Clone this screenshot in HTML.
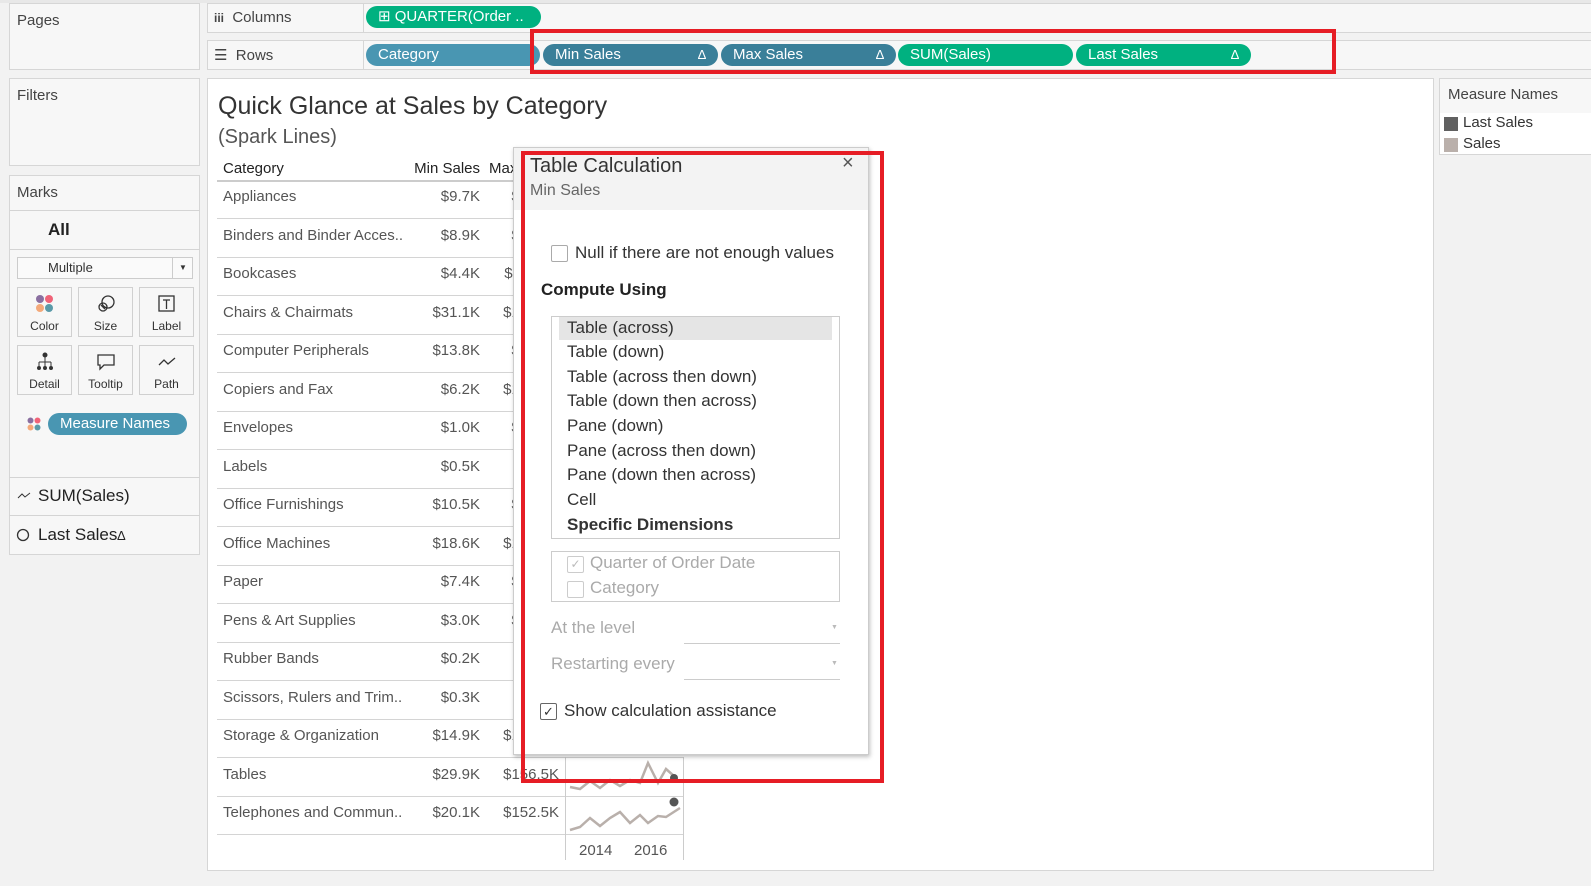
<!DOCTYPE html>
<html><head><meta charset="utf-8"><style>
*{margin:0;padding:0;box-sizing:border-box}
body{width:1591px;height:886px;background:#f2f2f2;font-family:"Liberation Sans",sans-serif;position:relative;overflow:hidden;color:#333}
.a{position:absolute}
.box{position:absolute;background:#f7f7f7;border:1px solid #d6d6d6}
.pill{position:absolute;height:22px;border-radius:11px;color:#fff;font-size:15px;line-height:22px;padding-left:12px}
.t{position:absolute;font-size:15px;color:#555;white-space:nowrap}
.r{text-align:right}
.hl{position:absolute;height:1px;background:#d4d4d4}
.mk{position:absolute;width:55px;height:50px;border:1px solid #d0d0d0;background:#f7f7f7;font-size:12px;text-align:center;color:#333}
.mk span{position:absolute;bottom:3px;left:0;right:0}
.cb{position:absolute;width:17px;height:17px;border:1px solid #aaa;background:#fff;border-radius:2px}
.li{position:absolute;left:567px;font-size:17px;color:#333}
.redb{position:absolute;border:4px solid #e61d25}
</style></head><body>
<div class="a" style="left:0;top:0;width:1591px;height:3px;background:#e8e8e8"></div>
<div class="box" style="left:9px;top:3px;width:191px;height:67px"><div class="t" style="left:7px;top:8px;color:#444">Pages</div></div>
<div class="box" style="left:9px;top:78px;width:191px;height:88px"><div class="t" style="left:7px;top:8px;color:#444">Filters</div></div>
<div class="box" style="left:9px;top:175px;width:191px;height:380px">
<div class="t" style="left:7px;top:8px;color:#444">Marks</div>
<div class="hl" style="left:0;top:34px;width:190px"></div>
<div class="a" style="left:38px;top:44px;font-size:17px;font-weight:bold;color:#222">All</div>
<div class="hl" style="left:0;top:73px;width:190px"></div>
<div class="a" style="left:7px;top:81px;width:176px;height:22px;border:1px solid #ccc;background:#fafafa;font-size:13px;line-height:20px;padding-left:30px">Multiple<div class="a" style="left:154px;top:0;width:1px;height:20px;background:#ccc"></div><div class="a" style="left:161px;top:0;font-size:8px">▼</div></div>
</div>
<div class="mk" style="left:17px;top:287px"><svg class="a" style="left:17px;top:6px" width="20" height="20"><circle cx="5" cy="5" r="4" fill="#8a6fa0"/><circle cx="14" cy="5" r="4" fill="#f06378"/><circle cx="5" cy="14" r="4" fill="#f4a97a"/><circle cx="14" cy="14" r="4" fill="#5a9aa8"/></svg><span>Color</span></div>
<div class="mk" style="left:78px;top:287px"><svg class="a" style="left:17px;top:6px" width="20" height="20" fill="none" stroke="#333" stroke-width="1.3"><circle cx="12" cy="8" r="6"/><circle cx="7" cy="13" r="4"/><path d="M5 11l4 4"/></svg><span>Size</span></div>
<div class="mk" style="left:139px;top:287px"><svg class="a" style="left:17px;top:6px" width="20" height="20" fill="none" stroke="#333" stroke-width="1.3"><rect x="2" y="2" width="15" height="15"/><path d="M6 6h7M9.5 6v9"/></svg><span>Label</span></div>
<div class="mk" style="left:17px;top:345px"><svg class="a" style="left:17px;top:6px" width="20" height="20" fill="#333" stroke="#333"><circle cx="10" cy="3" r="2"/><path d="M10 5v5M4 10h12M4 10v4M10 10v4M16 10v4" fill="none"/><circle cx="4" cy="16" r="1.5"/><circle cx="10" cy="16" r="1.5"/><circle cx="16" cy="16" r="1.5"/></svg><span>Detail</span></div>
<div class="mk" style="left:78px;top:345px"><svg class="a" style="left:17px;top:6px" width="20" height="20" fill="none" stroke="#333" stroke-width="1.3"><path d="M2 3h16v10H8l-4 4v-4H2z"/></svg><span>Tooltip</span></div>
<div class="mk" style="left:139px;top:345px"><svg class="a" style="left:17px;top:6px" width="20" height="20" fill="none" stroke="#333" stroke-width="1.3"><path d="M2 13l5-5 4 4 7-6"/></svg><span>Path</span></div>
<svg class="a" style="left:27px;top:417px" width="14" height="14"><circle cx="3.5" cy="3.5" r="3" fill="#8a6fa0"/><circle cx="10.5" cy="3.5" r="3" fill="#f06378"/><circle cx="3.5" cy="10.5" r="3" fill="#f4a97a"/><circle cx="10.5" cy="10.5" r="3" fill="#5a9aa8"/></svg>
<div class="pill" style="left:48px;top:413px;width:139px;background:#4996b2;padding-left:12px">Measure Names</div>
<div class="hl" style="left:9px;top:477px;width:191px"></div>
<svg class="a" style="left:17px;top:489px" width="14" height="12" fill="none" stroke="#333"><path d="M1 9l4-4 3 3 5-4"/></svg>
<div class="a" style="left:38px;top:486px;font-size:17px;color:#222">SUM(Sales)</div>
<div class="hl" style="left:9px;top:515px;width:191px"></div>
<svg class="a" style="left:16px;top:528px" width="14" height="14" fill="none" stroke="#333" stroke-width="1.3"><circle cx="7" cy="7" r="5.5"/></svg>
<div class="a" style="left:38px;top:525px;font-size:17px;color:#222">Last Sales<span style="font-size:13px">∆</span></div>
<div class="box" style="left:207px;top:3px;width:1384px;height:30px;border-right:none"></div>
<div class="a" style="left:363px;top:3px;width:1px;height:30px;background:#d6d6d6"></div>
<div class="t" style="left:214px;top:9px;color:#444"><b style="font-size:12px">iii</b>&nbsp; Columns</div>
<div class="pill" style="left:366px;top:6px;width:175px;background:#00b180">⊞ QUARTER(Order ..</div>
<div class="box" style="left:207px;top:40px;width:1384px;height:30px;border-right:none"></div>
<div class="a" style="left:363px;top:40px;width:1px;height:30px;background:#d6d6d6"></div>
<div class="t" style="left:214px;top:46px;color:#444">☰&nbsp; Rows</div>
<div class="pill" style="left:366px;top:44px;width:174px;background:#4996b2">Category</div>
<div class="pill" style="left:543px;top:44px;width:175px;background:#3a7f99">Min Sales<span class="a" style="right:12px;font-size:13px">∆</span></div>
<div class="pill" style="left:721px;top:44px;width:175px;background:#3a7f99">Max Sales<span class="a" style="right:12px;font-size:13px">∆</span></div>
<div class="pill" style="left:898px;top:44px;width:175px;background:#00b180">SUM(Sales)</div>
<div class="pill" style="left:1076px;top:44px;width:175px;background:#00b180">Last Sales<span class="a" style="right:12px;font-size:13px">∆</span></div>
<div class="redb" style="left:530px;top:29px;width:806px;height:45px"></div>
<div class="a" style="left:207px;top:78px;width:1227px;height:793px;background:#fff;border:1px solid #d6d6d6"></div>
<div class="a" style="left:218px;top:92px;font-size:25px;color:#333">Quick Glance at Sales by Category</div>
<div class="a" style="left:218px;top:126px;font-size:20px;color:#555">(Spark Lines)</div>
<div class="t" style="left:223px;top:160px;color:#222">Category</div>
<div class="t r" style="left:380px;top:160px;width:100px;color:#222">Min Sales</div>
<div class="t" style="left:489px;top:160px;color:#222">Max Sales</div>
<div class="a" style="left:217px;top:180px;width:350px;height:2px;background:#ccc"></div>
<div id="rows"></div>
<div class="a" style="left:565px;top:757px;width:1px;height:103px;background:#ccc"></div>
<div class="a" style="left:683px;top:757px;width:1px;height:103px;background:#ccc"></div>
<svg class="a" style="left:566px;top:757px" width="117" height="80" fill="none" stroke-width="2.5"><path d="M4 30l10 2 10-8 10 7 10-8 10 6 10-6 10 3 8-20 10 20 8-14 8 7" stroke="#b9b0ab"/><circle cx="108" cy="21" r="4" fill="#555" stroke="none"/><path d="M4 73l10-3 10-9 10 8 10-8 10-6 10 11 10-8 8 8 10-7 8 1 14-9" stroke="#b9b0ab"/><circle cx="108" cy="45" r="4.5" fill="#555" stroke="none"/></svg>
<div class="t" style="left:579px;top:842px">2014</div>
<div class="t" style="left:634px;top:842px">2016</div>
<div class="a" style="left:1439px;top:78px;width:152px;height:77px;background:#fff;border:1px solid #d6d6d6;border-right:none"></div>
<div class="a" style="left:1440px;top:79px;width:151px;height:34px;background:#f7f7f7"></div>
<div class="t" style="left:1448px;top:86px;color:#444">Measure Names</div>
<div class="a" style="left:1444px;top:117px;width:14px;height:14px;background:#606060"></div>
<div class="t" style="left:1463px;top:114px;color:#333">Last Sales</div>
<div class="a" style="left:1444px;top:138px;width:14px;height:14px;background:#bab0ab"></div>
<div class="t" style="left:1463px;top:135px;color:#333">Sales</div>
<div class="a" style="left:513px;top:147px;width:356px;height:608px;background:#fff;border:1px solid #ccc;box-shadow:1px 2px 4px rgba(0,0,0,.25)"></div>
<div class="a" style="left:514px;top:148px;width:354px;height:62px;background:#f3f3f3"></div>
<div class="a" style="left:530px;top:155px;font-size:20px;color:#333">Table Calculation</div>
<div class="a" style="left:530px;top:182px;font-size:16px;color:#666">Min Sales</div>
<div class="a" style="left:842px;top:152px;font-size:20px;color:#555">×</div>
<div class="cb" style="left:551px;top:245px"></div>
<div class="a" style="left:575px;top:243px;font-size:17px;color:#333">Null if there are not enough values</div>
<div class="a" style="left:541px;top:280px;font-size:17px;font-weight:bold;color:#222">Compute Using</div>
<div class="a" style="left:551px;top:316px;width:289px;height:223px;border:1px solid #ccc;background:#fff"></div>
<div class="a" style="left:559px;top:317px;width:273px;height:23px;background:#e5e5e5"></div>
<div class="li" style="top:318px">Table (across)</div>
<div class="li" style="top:342px">Table (down)</div>
<div class="li" style="top:367px">Table (across then down)</div>
<div class="li" style="top:391px">Table (down then across)</div>
<div class="li" style="top:416px">Pane (down)</div>
<div class="li" style="top:441px">Pane (across then down)</div>
<div class="li" style="top:465px">Pane (down then across)</div>
<div class="li" style="top:490px">Cell</div>
<div class="li" style="top:515px;font-weight:bold">Specific Dimensions</div>
<div class="a" style="left:551px;top:551px;width:289px;height:51px;border:1px solid #ccc"></div>
<div class="cb" style="left:567px;top:556px;border-color:#ccc;color:#bbb;font-size:12px;line-height:15px;text-align:center">✓</div>
<div class="a" style="left:590px;top:553px;font-size:17px;color:#aaa">Quarter of Order Date</div>
<div class="cb" style="left:567px;top:581px;border-color:#ccc"></div>
<div class="a" style="left:590px;top:578px;font-size:17px;color:#aaa">Category</div>
<div class="a" style="left:551px;top:618px;font-size:17px;color:#aaa">At the level</div>
<div class="a" style="left:684px;top:643px;width:156px;height:1px;background:#ccc"></div>
<div class="a" style="left:831px;top:624px;font-size:7px;color:#bbb">▼</div>
<div class="a" style="left:551px;top:654px;font-size:17px;color:#aaa">Restarting every</div>
<div class="a" style="left:684px;top:679px;width:156px;height:1px;background:#ccc"></div>
<div class="a" style="left:831px;top:660px;font-size:7px;color:#bbb">▼</div>
<div class="cb" style="left:540px;top:703px;border-color:#666;font-size:13px;line-height:15px;text-align:center;color:#333">✓</div>
<div class="a" style="left:564px;top:701px;font-size:17px;color:#333">Show calculation assistance</div>
<div class="redb" style="left:521px;top:151px;width:363px;height:632px"></div>
<script>
var d=[["Appliances","$9.7K","$89.2K"],["Binders and Binder Acces..","$8.9K","$90.1K"],["Bookcases","$4.4K","$112.3K"],["Chairs & Chairmats","$31.1K","$184.6K"],["Computer Peripherals","$13.8K","$98.0K"],["Copiers and Fax","$6.2K","$121.4K"],["Envelopes","$1.0K","$22.1K"],["Labels","$0.5K","$8.3K"],["Office Furnishings","$10.5K","$75.4K"],["Office Machines","$18.6K","$175.2K"],["Paper","$7.4K","$50.2K"],["Pens & Art Supplies","$3.0K","$19.8K"],["Rubber Bands","$0.2K","$3.1K"],["Scissors, Rulers and Trim..","$0.3K","$9.9K"],["Storage & Organization","$14.9K","$101.7K"],["Tables","$29.9K","$156.5K"],["Telephones and Commun..","$20.1K","$152.5K"]];
var h="";d.forEach(function(r,i){var y=188+i*38.5;h+='<div class="t" style="left:223px;top:'+y+'px">'+r[0].replace("&","&amp;")+'</div><div class="t r" style="left:400px;top:'+y+'px;width:80px">'+r[1]+'</div>';h+='<div class="t r" style="left:480px;top:'+y+'px;width:79px">'+r[2]+'</div>';h+='<div class="hl" style="left:217px;top:'+(218+i*38.5)+'px;width:'+(i>=14?466:348)+'px"></div>';});
document.getElementById("rows").innerHTML=h;
</script>
</body></html>
